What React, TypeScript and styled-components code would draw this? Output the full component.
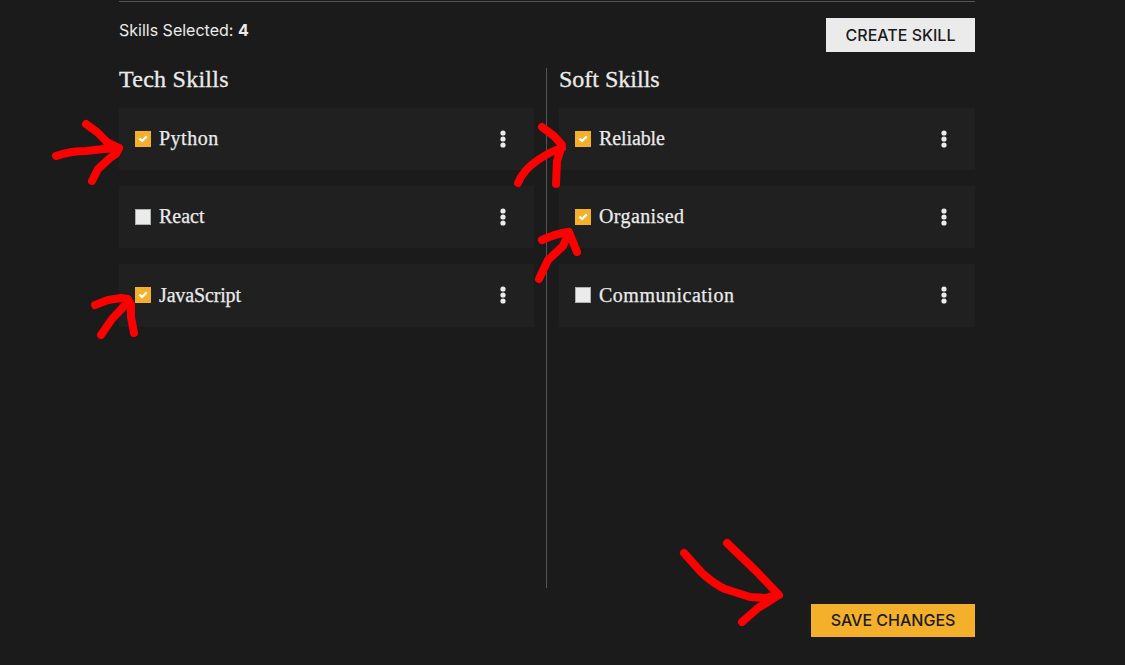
import React from "react";
import styled, { createGlobalStyle } from "styled-components";

const Global = createGlobalStyle`
  * { box-sizing: border-box; }
  html, body { margin: 0; background: #1b1b1b; overflow: hidden; }
  body { color: #ebebeb; font-family: Inter, "Liberation Sans", sans-serif; }
`;

const Page = styled.main`
  position: relative;
  width: 1125px;
  height: 665px;
  padding: 1px 150px 0 119px;
  background: #1b1b1b;
`;

const Header = styled.header`
  display: flex;
  justify-content: space-between;
  align-items: flex-start;
  height: 67px;
  border-top: 1px solid #545454;
  padding-top: 16px;
`;

const Count = styled.p`
  margin: 1px 0 0;
  font-size: 16px;
  line-height: 22px;
  strong { font-weight: 700; }
`;

const Button = styled.button<{ $primary?: boolean }>`
  width: ${(p) => (p.$primary ? 164 : 149)}px;
  height: ${(p) => (p.$primary ? 33 : 34)}px;
  padding: 0;
  border: 0;
  background: ${(p) => (p.$primary ? "#f4b02a" : "#ebebeb")};
  color: #1b1b1b;
  font: 500 16px/1 Inter, "Liberation Sans", sans-serif;
  line-height: ${(p) => (p.$primary ? 32 : 34)}px;
  padding-bottom: ${(p) => (p.$primary ? 1 : 0)}px;
  white-space: nowrap;
`;

const Columns = styled.div`
  display: grid;
  grid-template-columns: 415px 1px 416px;
  column-gap: 12px;
  height: 520px;
`;

const Divider = styled.div`
  background: #545454;
`;

const Title = styled.h2<{ $spacing: number }>`
  height: 40px;
  margin: 0;
  font: 400 24px/23px "Liberation Serif", serif;
  letter-spacing: ${(p) => p.$spacing}px;
  -webkit-text-stroke: 0.3px #ebebeb;
  white-space: nowrap;
`;

const List = styled.div`
  display: grid;
  grid-template-rows: 62px 62px 63px;
  row-gap: 16px;
`;

const Row = styled.div`
  display: flex;
  align-items: flex-start;
  padding: 23px 23px 0 16px;
  background: #202020;
`;

const Box = styled.span<{ $on: boolean }>`
  display: flex;
  flex: none;
  width: 16px;
  height: 16px;
  background: ${(p) => (p.$on ? "#f4b02a" : "#ebebeb")};
  border: ${(p) => (p.$on ? "0" : "1px solid #a9b0ae")};
`;

const Label = styled.span<{ $spacing: number; $drop: number }>`
  flex: 1;
  margin: ${(p) => p.$drop - 5}px 0 0 8px;
  font: 400 20px/24px "Liberation Serif", serif;
  letter-spacing: ${(p) => p.$spacing}px;
  -webkit-text-stroke: 0.25px #ebebeb;
`;

const Footer = styled.footer`
  display: flex;
  justify-content: flex-end;
  padding-top: 16px;
`;

const Menu = styled.svg`
  flex: none;
  margin-top: -1px;
`;

const Marks = styled.svg`
  position: absolute;
  inset: 0;
  pointer-events: none;
`;

const Check = () => (
  <svg width="16" height="16" viewBox="0 0 16 16" fill="none" stroke="#fff" strokeWidth="2.3">
    <path d="M4.4 7.5 L7 10 L11.8 5.4" />
  </svg>
);

const Dots = () => (
  <Menu width="16" height="18" viewBox="0 0 16 18" fill="#ebebeb">
    <circle cx="8" cy="3" r="2.6" />
    <circle cx="8" cy="9" r="2.6" />
    <circle cx="8" cy="15" r="2.6" />
  </Menu>
);

type Skill = { name: string; on: boolean; spacing: number; drop?: number };

const tech: Skill[] = [
  { name: "Python", on: true, spacing: 0.5 },
  { name: "React", on: false, spacing: 0 },
  { name: "JavaScript", on: true, spacing: -0.15, drop: 1 },
];
const soft: Skill[] = [
  { name: "Reliable", on: true, spacing: -0.1 },
  { name: "Organised", on: true, spacing: 0.4 },
  { name: "Communication", on: false, spacing: 0.5, drop: 1 },
];

const Column = ({ title, spacing, skills }: { title: string; spacing: number; skills: Skill[] }) => (
  <section>
    <Title $spacing={spacing}>{title}</Title>
    <List>
      {skills.map((s) => (
        <Row key={s.name}>
          <Box $on={s.on}>{s.on && <Check />}</Box>
          <Label $spacing={s.spacing} $drop={s.drop ?? 0}>{s.name}</Label>
          <Dots />
        </Row>
      ))}
    </List>
  </section>
);

export default function App() {
  return (
    <>
      <Global />
      <Page>
        <Header>
          <Count>
            Skills Selected: <strong>4</strong>
          </Count>
          <Button>CREATE SKILL</Button>
        </Header>
        <Columns>
          <Column title="Tech Skills" spacing={0.25} skills={tech} />
          <Divider />
          <Column title="Soft Skills" spacing={0} skills={soft} />
        </Columns>
        <Footer>
          <Button $primary>SAVE CHANGES</Button>
        </Footer>
        <Marks width="1125" height="665" viewBox="0 0 1125 665" fill="none" stroke="#f00" strokeWidth="8" strokeLinecap="round" strokeLinejoin="round">
          <path d="M56 156 Q70 151 86 151 L104 149 L119 148 M86 124 L97 132 L107 142 L119 148 L116 154 L110 158 L98 169 L92 181" />
          <path d="M95 305 L108 300 L121 298 L128 299 L131 305 L131 317 L134 333 M101 335 L112 319 L128 302" />
          <path d="M542 127 L554 136 L562 145 L557 161 L556 184 M518 183 Q523 170 538 160 Q551 151 562 148" />
          <path d="M542 240 Q555 234 568 232 M539 279 L548 260 L563 246 L569 232 L577 252" />
          <path d="M684 553 L702 573 Q714 584 725 589 L750 597 L766 598 L779 595 M727 543 L756 571 L779 595 L768 602 L758 608 L742 622" />
        </Marks>
      </Page>
    </>
  );
}
